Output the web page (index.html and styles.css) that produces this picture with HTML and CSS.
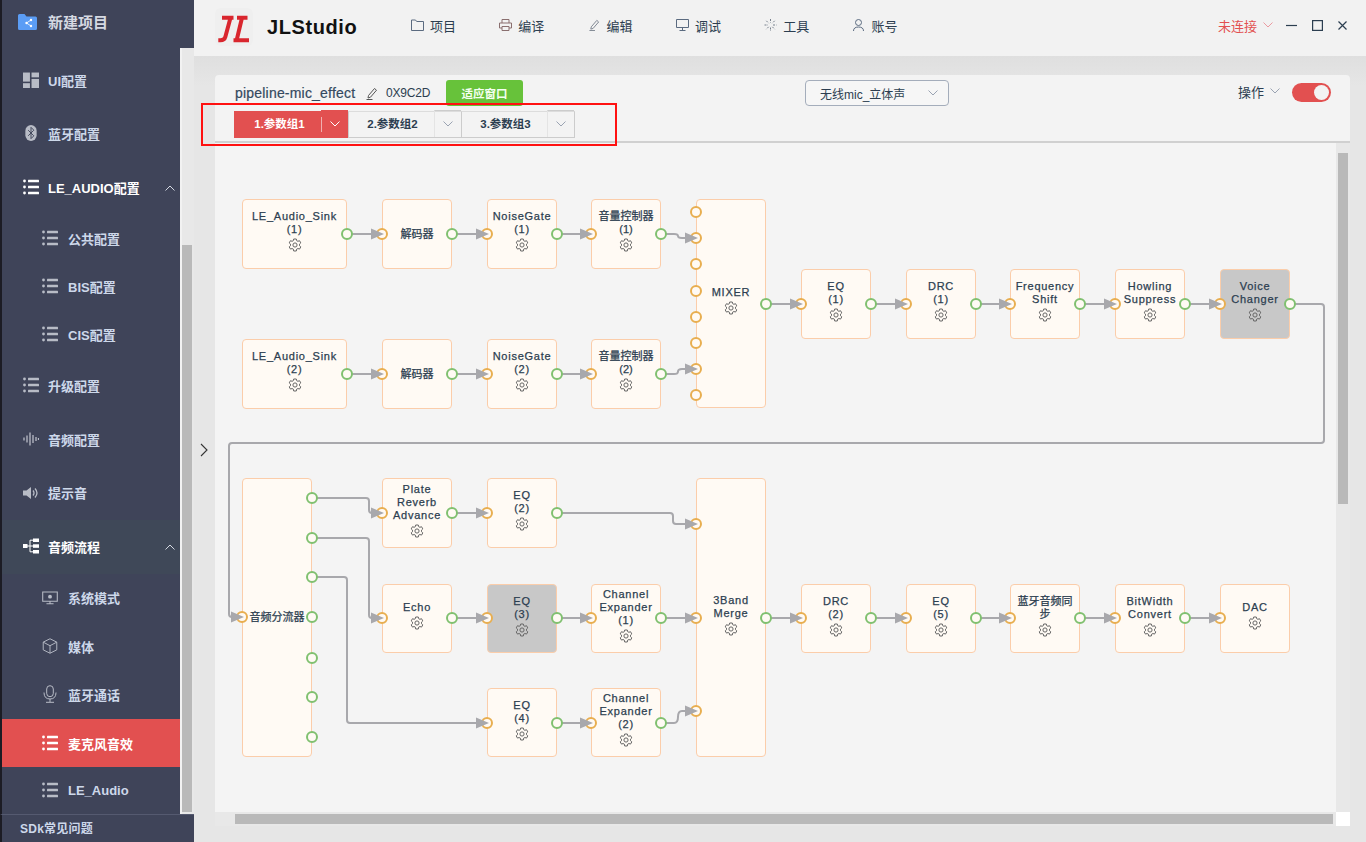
FILE: index.html
```html
<!DOCTYPE html>
<html lang="zh">
<head>
<meta charset="utf-8">
<title>JLStudio</title>
<link rel="stylesheet" href="styles.css">
</head>
<body>
<svg class="defs" width="0" height="0">
  <defs>
    <symbol id="i-list" viewBox="0 0 16 16"><circle cx="1.500" cy="2" r="1.400"/><circle cx="1.500" cy="8" r="1.400"/><circle cx="1.500" cy="14" r="1.400"/><rect x="5" y=".7" width="11" height="2.600" rx=".5"/><rect x="5" y="6.700" width="11" height="2.600" rx=".5"/><rect x="5" y="12.700" width="11" height="2.600" rx=".5"/></symbol>
    <symbol id="i-gear" viewBox="0 0 14 14"><path fill="none" stroke="currentColor" stroke-width="1" d="M5.700 1h2.600l.4 1.700 1.200.6 1.600-.6 1.300 2.200-1.300 1.200v1.600l1.300 1.200-1.300 2.200-1.600-.6-1.200.6-.4 1.900H5.700l-.4-1.900-1.200-.6-1.600.6-1.300-2.200 1.300-1.200V6.100L1.200 4.900l1.300-2.200 1.600.6 1.200-.6z"/><circle cx="7" cy="7" r="2.100" fill="none" stroke="currentColor" stroke-width="1"/></symbol>
    <symbol id="i-chev" viewBox="0 0 10 6"><path d="M.5.5 5 5 9.500.5" fill="none" stroke="currentColor" stroke-width="1"/></symbol>
    <symbol id="i-pen" viewBox="0 0 12 13"><path d="M2.500 8.500 8.500 1.500l2 1.700-6 7-2.500.8zM.5 12.500h6" fill="none" stroke="currentColor" stroke-width="1"/></symbol>
  </defs>
</svg>
<div class="app">
  <aside class="side">
    <div class="side-top">
      <svg class="ic-folder" viewBox="0 0 19 16"><path d="M0 1.500Q0 0 1.500 0h5l2 2.500h9Q19 2.500 19 4v10.500q0 1.500-1.500 1.500h-16Q0 16 0 14.500z" fill="#5b9df5"/><circle cx="13" cy="6" r="1.200" fill="#fff"/><circle cx="8.500" cy="9" r="1.200" fill="#fff"/><circle cx="13" cy="12" r="1.200" fill="#fff"/><path d="M13 6 8.500 9 13 12" fill="none" stroke="#fff" stroke-width=".8"/></svg>
      <span class="top-label">新建项目</span>
    </div>
    <div class="side-mid">
      <nav class="menu">
        <a class="row row-first">
          <svg class="ic" viewBox="0 0 15 15"><g fill="#b8bcc6"><rect width="6.500" height="8.500" y=".5"/><rect x="8" y=".5" width="7" height="4.500"/><rect y="10.500" width="6.500" height="4.500"/><rect x="8" y="6.500" width="7" height="8.500"/></g></svg>
          <span>UI配置</span>
        </a>
        <a class="row">
          <svg class="ic" viewBox="0 0 15 17"><rect x="1.500" y="0" width="12" height="17" rx="6" fill="#b8bcc6"/><path d="M4.500 5.500l6 6-3 3v-12l3 3-6 6" fill="none" stroke="#3f4459" stroke-width="1"/></svg>
          <span>蓝牙配置</span>
        </a>
        <a class="row row-open">
          <svg class="ic ic-w"><use href="#i-list"/></svg>
          <span>LE_AUDIO配置</span>
          <svg class="up" viewBox="0 0 10 6"><path d="M.5 5.500 5 1l4.500 4.500" fill="none" stroke="currentColor"/></svg>
        </a>
        <a class="sub"><svg class="ic ic-g"><use href="#i-list"/></svg><span>公共配置</span></a>
        <a class="sub"><svg class="ic ic-g"><use href="#i-list"/></svg><span>BIS配置</span></a>
        <a class="sub"><svg class="ic ic-g"><use href="#i-list"/></svg><span>CIS配置</span></a>
        <a class="row"><svg class="ic ic-g"><use href="#i-list"/></svg><span>升级配置</span></a>
        <a class="row">
          <svg class="ic" viewBox="0 0 16 14"><g stroke="#b8bcc6" stroke-width="1.300"><path d="M1 5.500v3M4 3.500v7M7 .5v13M10 3v8M13 5v4M15.500 6v2"/></g></svg>
          <span>音频配置</span>
        </a>
        <a class="row row-short">
          <svg class="ic" viewBox="0 0 16 14"><path d="M0 4.500h3.500L8 1v12L3.500 9.500H0z" fill="#b8bcc6"/><path d="M10 4.500q2 2.500 0 5M12 2.500q4 4.500 0 9" fill="none" stroke="#b8bcc6" stroke-width="1.300"/></svg>
          <span>提示音</span>
        </a>
        <a class="row row-open row-flow">
          <svg class="ic" viewBox="0 0 16 16"><g fill="#fff"><rect x="0" y="6" width="4.500" height="4"/><rect x="10" y="0.500" width="6" height="3.500"/><rect x="10" y="6.300" width="6" height="3.500"/><rect x="10" y="12" width="6" height="3.500"/></g><path d="M4 8h6M7 2.200V13.800M7 2.200h3M7 13.800h3" stroke="#fff" fill="none"/></svg>
          <span>音频流程</span>
          <svg class="up" viewBox="0 0 10 6"><path d="M.5 5.500 5 1l4.500 4.500" fill="none" stroke="currentColor"/></svg>
        </a>
        <a class="sub sub-tall">
          <svg class="ic" viewBox="0 0 18 15"><path d="M.8.8h16.400v10.400H.800zM5 14h8M9 11.200V14" fill="none" stroke="#b8bcc6" stroke-width="1.200"/><circle cx="9" cy="6" r="2.200" fill="#b8bcc6"/></svg>
          <span>系统模式</span>
        </a>
        <a class="sub">
          <svg class="ic" viewBox="0 0 17 17"><path d="M8.500.8l7.200 3.600v8.200l-7.200 3.600-7.200-3.600V4.400zM1.300 4.400l7.200 3.800 7.200-3.800M8.500 8.200v8" fill="none" stroke="#b8bcc6"/></svg>
          <span>媒体</span>
        </a>
        <a class="sub">
          <svg class="ic ic-mic" viewBox="0 0 14 18"><rect x="3.700" y=".7" width="6.600" height="11" rx="3.300" fill="none" stroke="#b8bcc6"/><path d="M1 7.500q0 6.500 6 6.500t6-6.500M7 14v3M3 17.300h8" fill="none" stroke="#b8bcc6"/></svg>
          <span>蓝牙通话</span>
        </a>
        <a class="sub sub-active"><svg class="ic ic-w"><use href="#i-list"/></svg><span>麦克风音效</span></a>
        <a class="sub"><svg class="ic ic-g"><use href="#i-list"/></svg><span>LE_Audio</span></a>
      </nav>
      <div class="side-track"><div class="side-thumb"></div></div>
    </div>
    <div class="side-foot">SDk常见问题</div>
  </aside>

  <div class="main">
    <header class="top">
      <div class="logo">
        <svg viewBox="0 0 36 36" width="36" height="36"><path d="M6 8.700H17.500M14.500 8.700 9.300 28Q8.400 31.300 4.500 31.300H2.300M21 8.700H31.500M26 8.700 20.700 31M17.500 31.200H33" fill="none" stroke="#d9262e" stroke-width="4"/></svg>
      </div>
      <div class="brand">JLStudio</div>
      <nav class="nav">
        <a class="nav-item"><svg viewBox="0 0 13 12"><path d="M.5 1h4l1.200 1.500h6.800v9H.5z" fill="none" stroke="#5b6b80"/></svg>项目</a>
        <a class="nav-item"><svg viewBox="0 0 13 12"><path d="M3 4V.5h7V4M3 9H.5V4h12v5H10M3 7.500h7v4H3z" fill="none" stroke="#8a6f6f"/></svg>编译</a>
        <a class="nav-item"><svg><use href="#i-pen"/></svg>编辑</a>
        <a class="nav-item"><svg viewBox="0 0 13 12"><path d="M.5.5h12v8H.5zM3.500 11.500h6M6.500 8.500v3" fill="none" stroke="#5b6b80"/></svg>调试</a>
        <a class="nav-item"><svg viewBox="0 0 13 12"><path d="M6.500 0v3.500M6.500 8.500V12M.5 6H4M9 6h3.500M2.300 1.800l2.400 2.400M8.300 7.800l2.400 2.400M10.700 1.800 8.300 4.200M4.700 7.800l-2.400 2.400" stroke="#77808c" stroke-dasharray="2 1"/></svg>工具</a>
        <a class="nav-item"><svg viewBox="0 0 13 12"><circle cx="6.500" cy="3.500" r="3" fill="none" stroke="#5b6b80"/><path d="M1.500 12q0-4 5-4t5 4" fill="none" stroke="#5b6b80"/></svg>账号</a>
      </nav>
      <div class="conn">未连接<svg class="chev"><use href="#i-chev"/></svg></div>
      <div class="win">
        <svg viewBox="0 0 11 11"><path d="M0 5.500h11" stroke="#2c3e50" stroke-width="1.200"/></svg>
        <svg viewBox="0 0 11 11"><rect x=".6" y=".6" width="9.800" height="9.800" fill="none" stroke="#2c3e50" stroke-width="1.200"/></svg>
        <svg viewBox="0 0 11 11"><path d="M1.500 1.500l8 8M9.500 1.500l-8 8" stroke="#2c3e50" stroke-width="1.200"/></svg>
      </div>
    </header>

    <div class="work">
      <div class="gutter"><svg viewBox="0 0 8 14" width="8" height="14"><path d="M1 1l6 6-6 6" fill="none" stroke="#333" stroke-width="1.100"/></svg></div>
      <section class="card">
        <div class="card-head">
          <div class="head-line">
            <span class="pipe">pipeline-mic_effect</span>
            <svg class="pen"><use href="#i-pen"/></svg>
            <span class="hex">0X9C2D</span>
            <button class="fit">适应窗口</button>
            <div class="sel">无线mic_立体声<svg class="chev"><use href="#i-chev"/></svg></div>
            <div class="ops">操作<svg class="chev"><use href="#i-chev"/></svg></div>
            <div class="toggle"><i></i></div>
          </div>
          <div class="tabs">
            <div class="tab tab-on"><span>1.参数组1</span><b><svg class="chev"><use href="#i-chev"/></svg></b></div>
            <div class="tab tab-mid"><span>2.参数组2</span><b><svg class="chev"><use href="#i-chev"/></svg></b></div>
            <div class="tab"><span>3.参数组3</span><b><svg class="chev"><use href="#i-chev"/></svg></b></div>
          </div>
        </div>
        <div class="canvas-wrap">
          <div class="canvas" id="canvas">
            <svg class="wires" id="wires" width="1121" height="669" viewBox="0 0 1121 669"></svg>
          </div>
          <div class="vbar"><div class="vthumb"></div></div>
          <div class="hbar"><div class="hthumb"></div></div>
          <div class="corner"></div>
        </div>
      </section>
    </div>
  </div>
  <div class="redbox"></div>
</div>
<script src="app.js"></script>
</body>
</html>
```
FILE: styles.css
```css
* { box-sizing: border-box; }
html, body { margin: 0; height: 100%; overflow: hidden; }
body { font-family: "Liberation Sans", "Noto Sans CJK SC", sans-serif; color: #2c3e50; background: #e6e6e6; }
.defs { position: absolute; }
.app { position: relative; display: flex; width: 1366px; height: 842px; overflow: hidden; }

/* sidebar */
.side { width: 194px; display: flex; flex-direction: column; background: #e8e8e8; flex: none; }
.side-top { height: 48px; background: #3f4459; border-left: 2px solid #1c1c24; display: flex; align-items: flex-start; padding: 14px 0 0 16px; color: #d5d9e2; }
.ic-folder { width: 19px; height: 16px; margin-right: 11px; flex: none; }
.top-label { font-size: 15px; font-weight: 700; line-height: 18px; }
.side-mid { flex: 1; display: flex; min-height: 0; }
.menu { width: 180px; background: #3f4459; border-left: 2px solid #1c1c24; padding-top: 5px; display: flex; flex-direction: column; }
.row, .sub { display: flex; align-items: center; flex: none; color: #cdd8ea; font-size: 13px; font-weight: 700; position: relative; padding-bottom: 2px; }
.row { height: 54px; padding-left: 21px; }
.row-first { padding-bottom: 0; }
.row-short { height: 53px; }
.sub { height: 48px; padding-left: 40px; }
.sub-tall { height: 49px; }
.row-open { color: #fff; }
.row-flow { background: #3f4858; }
.sub-active { background: #e25050; color: #fff; padding-bottom: 0; }
.ic { width: 16px; height: 16px; margin-right: 9px; flex: none; }
.ic-w { fill: #fff; }
.ic-g { fill: #b8bcc6; }
.sub .ic { margin-right: 10px; }
.ic-mic { height: 18px; }
.up { position: absolute; right: 5px; top: 50%; margin-top: -3px; width: 10px; height: 6px; color: #d5d9e2; }
.side-track { width: 14px; padding-left: 2px; background: linear-gradient(90deg, #f2f2f2 2px, #e8e8e8 2px); }
.side-thumb { width: 10px; height: 567px; margin-top: 197px; background: #b9b9b9; }
.side-foot { height: 28px; background: #3f4459; border-left: 2px solid #1c1c24; border-top: 1px solid #555a70; padding: 7px 0 0 18px; font-size: 12px; letter-spacing: .25px; line-height: 15px; font-weight: 700; color: #cdd8ea; }

/* header */
.main { flex: 1; display: flex; flex-direction: column; min-width: 0; }
.top { height: 56px; background: #f2f2f2; display: flex; align-items: center; flex: none; padding-bottom: 6px; }
.logo { width: 38px; height: 38px; margin: 4px 0 0 21px; background: #efefef; border-radius: 6px; display: flex; align-items: center; justify-content: center; flex: none; }
.brand { margin: 4px 0 0 14px; width: 144px; font-size: 20px; font-weight: 700; letter-spacing: .6px; color: #111; }
.nav { display: flex; flex: 1; }
.nav-item { display: flex; align-items: center; width: 88.300px; font-size: 13px; color: #2c3e50; flex: none; }
.nav-item svg { width: 13px; height: 12px; margin-right: 6px; color: #77808c; flex: none; }
.conn { display: flex; align-items: center; color: #e25050; font-size: 13px; margin-right: 13px; }
.chev { width: 10px; height: 6px; margin-left: 6px; color: #9aa3b2; flex: none; }
.conn .chev { color: #eb9aa0; }
.win { display: flex; gap: 14.500px; margin-right: 18px; }
.win svg { width: 11px; height: 11px; }

/* work area */
.work { flex: 1; display: flex; background: linear-gradient(#dfdfdf, #e6e6e6 30px); padding: 19px 16px 16px 0; min-height: 0; }
.gutter { width: 21px; flex: none; display: flex; align-items: flex-start; padding: 368px 0 0 6px; }
.card { flex: 1; background: #f3f3f3; border-radius: 4px 4px 0 0; display: flex; flex-direction: column; min-width: 0; }
.card-head { height: 68px; border-bottom: 2px solid #d0d0d0; padding: 5px 0 0 20px; flex: none; }
.head-line { display: flex; align-items: center; height: 26px; }
.pipe { font-size: 14px; letter-spacing: .2px; color: #34495e; width: 121px; white-space: nowrap; -webkit-text-stroke: .2px #34495e; }
.pen { width: 12px; height: 13px; margin-left: 10px; color: #555; flex: none; }
.hex { font-size: 12px; letter-spacing: -.2px; margin-left: 8px; width: 60px; color: #2c3e50; }
.fit { width: 77px; height: 26px; border: 0; border-radius: 3px; background: #67c23a; color: #f4fff0; font: 700 11.500px "Liberation Sans", "Noto Sans CJK SC", sans-serif; padding: 0; }
.sel { margin-left: 282px; width: 144px; height: 26px; border: 1px solid #a4adbb; border-radius: 4px; display: flex; align-items: center; justify-content: space-between; padding: 0 10px 0 14px; font-size: 12px; color: #2c3e50; background: #f6f6f6; }
.ops { margin-left: 289px; width: 54px; font-size: 13px; display: flex; align-items: center; margin-top: -4px; }
.ops .chev { margin-left: 6px; }
.toggle { width: 39px; height: 19px; border-radius: 10px; background: #e25050; position: relative; margin-top: -2px; }
.toggle i { position: absolute; top: 2px; right: 2px; width: 15px; height: 15px; border-radius: 50%; background: #f3f3f3; }
.tabs { display: flex; margin: 5px 0 0 -1px; }
.tab { width: 114px; height: 27px; display: flex; border-top: 1px solid #dcdcdc; border-bottom: 1px solid #ccc; font-size: 11.500px; font-weight: 700; color: #2c3e50; position: relative; background: #f3f3f3; }
.tab-mid { width: 113px; }
.tab span { flex: 1; text-align: center; line-height: 25px; padding-left: 2px; }
.tab b { width: 27px; margin-top: -2px; border-top: 1px solid #ccc; border-left: 1px solid #e4e4e4; display: flex; align-items: center; justify-content: center; font-weight: 400; }
.tab b .chev { margin: 0; }
.tab + .tab { border-left: 1px solid #ccc; }
.tab:last-child { border-right: 1px solid #ccc; }
.tab-on { background: #e25050; color: #fff; border: 0; }
.tab-on span { line-height: 27px; padding-left: 4px; }
.tab-on b { background: #e25050; border: 0; position: relative; margin-top: -1px; }
.tab-on b::before { content: ""; position: absolute; left: 0; top: 7px; bottom: 6px; width: 1px; background: #f0b0b0; }
.tab-on .chev { color: #fff; }
.redbox { position: absolute; left: 201px; top: 103px; width: 416px; height: 43px; border: 2px solid #f11; }

/* canvas */
.canvas-wrap { position: relative; flex: 1; background: #f4f4f4; min-height: 0; overflow: hidden; }
.canvas { position: relative; width: 1121px; height: 669px; }
.wires { position: absolute; left: 0; top: 0; }
.node { position: absolute; background: #fffaf4; border: 1px solid #fbcdaa; border-radius: 4px; display: flex; flex-direction: column; align-items: center; justify-content: center; text-align: center; font-size: 11px; line-height: 13px; letter-spacing: .75px; color: #2c3e50; -webkit-text-stroke: .25px #2c3e50; }
.node-cjk { letter-spacing: 0; }
.node-gear svg { margin-bottom: 6px; }
.node-sel { background: #c8c8c8; }
.node svg { width: 14px; height: 14px; margin-top: 2px; color: #666; flex: none; }
.node .nm { white-space: pre-line; }
.port { position: absolute; width: 12px; height: 12px; margin: -6px 0 0 -6px; border-radius: 50%; border: 2px solid #e8ae50; background: #fffaf4; }
.port-out { border-color: #80c070; }
.vbar { position: absolute; right: 0; top: 0; width: 14px; height: 669px; background: #e8e8e8; padding: 10px 0 0 2px; }
.vthumb { width: 10px; height: 351px; background: #b9b9b9; }
.hbar { position: absolute; left: 0; top: 669px; width: 1121px; height: 14px; background: #e8e8e8; padding: 2px 0 0 20px; }
.hthumb { width: 1098px; height: 10px; background: #b9b9b9; }
.corner { position: absolute; right: 0; bottom: 0; width: 14px; height: 14px; background: #fff; }
```
FILE: app.js
```js
var OX = 215, OY = 143;
var GEAR = '<svg><use href="#i-gear"/></svg>';
var nodes = [
  [242,199,105,70,'LE_Audio_Sink\n(1)',1],
  [382,199,70,70,'解码器',0],
  [487,199,70,70,'NoiseGate\n(1)',1],
  [591,199,70,70,'音量控制器\n(1)',1],
  [696,199,70,209,'MIXER',1],
  [801,269,70,70,'EQ\n(1)',1],
  [906,269,70,70,'DRC\n(1)',1],
  [1010,269,70,70,'Frequency\nShift',1],
  [1115,269,70,70,'Howling\nSuppress',1],
  [1220,269,70,70,'Voice\nChanger',1,1],
  [242,339,105,70,'LE_Audio_Sink\n(2)',1],
  [382,339,70,70,'解码器',0],
  [487,339,70,70,'NoiseGate\n(2)',1],
  [591,339,70,70,'音量控制器\n(2)',1],
  [242,478,70,279,'音频分流器',0],
  [382,478,70,70,'Plate\nReverb\nAdvance',1],
  [487,478,70,70,'EQ\n(2)',1],
  [696,478,70,279,'3Band\nMerge',1],
  [382,584,70,69,'Echo',1],
  [487,584,70,69,'EQ\n(3)',1,1],
  [591,584,70,69,'Channel\nExpander\n(1)',1],
  [801,584,70,69,'DRC\n(2)',1],
  [906,584,70,69,'EQ\n(5)',1],
  [1010,584,70,69,'蓝牙音频同\n步',1],
  [1115,584,70,69,'BitWidth\nConvert',1],
  [1220,584,70,69,'DAC',1],
  [487,688,70,69,'EQ\n(4)',1],
  [591,688,70,69,'Channel\nExpander\n(2)',1]
];
var outs = [[347,234],[452,234],[557,234],[661,234],[766,304],[871,304],[976,304],[1080,304],[1185,304],[1290,304],
  [347,374],[452,374],[557,374],[661,374],
  [312,498],[312,538],[312,577],[312,617],[312,658],[312,697],[312,737],
  [452,513],[557,513],[452,618],[557,618],[661,618],[766,618],[871,618],[976,618],[1080,618],[1185,618],[557,723],[661,723]];
var ins = [[382,234],[487,234],[591,234],[696,212],[696,238],[696,264],[696,291],[696,317],[696,343],[696,369],[696,395],
  [801,304],[906,304],[1010,304],[1115,304],[1220,304],
  [382,374],[487,374],[591,374],
  [242,617],[382,513],[487,513],[696,524],[382,618],[487,618],[591,618],[696,618],[801,618],[906,618],[1010,618],[1115,618],[1220,618],
  [487,723],[591,723],[696,711]];
var wires = [
  'M347 234H382','M452 234H487','M557 234H591','M661 234H674Q678 234 678 236Q678 238 682 238H696',
  'M766 304H801','M871 304H906','M976 304H1010','M1080 304H1115','M1185 304H1220',
  'M347 374H382','M452 374H487','M557 374H591','M661 374H674Q678 374 678 371.500Q678 369 682 369H696',
  'M1290 304H1321Q1324 304 1324 307V440Q1324 443 1321 443H232Q229 443 229 446V614Q229 617 232 617H242',
  'M312 498H366Q369 498 369 501V510Q369 513 372 513H382',
  'M452 513H487','M557 513H670Q673 513 673 516V521Q673 524 676 524H696',
  'M312 538H366Q369 538 369 541V615Q369 618 372 618H382',
  'M312 577H344Q347 577 347 580V720Q347 723 350 723H487',
  'M452 618H487','M557 618H591','M661 618H696','M766 618H801','M871 618H906','M976 618H1010','M1080 618H1115','M1185 618H1220',
  'M557 723H591','M661 723H674Q678 723 678 717Q678 711 682 711H696'
];
var arrowTips = [[382,234],[487,234],[591,234],[696,238],[801,304],[906,304],[1010,304],[1115,304],[1220,304],
  [382,374],[487,374],[591,374],[696,369],[242,617],[382,513],[487,513],[696,524],[382,618],[487,618],[591,618],[696,618],
  [801,618],[906,618],[1010,618],[1115,618],[1220,618],[487,723],[591,723],[696,711]];

var canvas = document.getElementById('canvas');
var svg = document.getElementById('wires');
var s = '<g transform="translate(' + (-OX) + ' ' + (-OY) + ')" fill="none" stroke="#a8a8ac" stroke-width="2">';
wires.forEach(function (d) { s += '<path d="' + d + '"/>'; });
s += '</g>';
svg.innerHTML = s;

nodes.forEach(function (n) {
  var el = document.createElement('div');
  var cjk = /[^\x00-\x7f]/.test(n[4]);
  el.className = 'node' + (n[6] ? ' node-sel' : '') + (cjk ? ' node-cjk' : '') + (n[5] ? ' node-gear' : '');
  el.style.left = (n[0] - OX) + 'px';
  el.style.top = (n[1] - OY) + 'px';
  el.style.width = n[2] + 'px';
  el.style.height = n[3] + 'px';
  el.innerHTML = '<div class="nm"></div>' + (n[5] ? GEAR : '');
  el.firstChild.textContent = n[4];
  canvas.appendChild(el);
});
function port(p, cls) {
  var el = document.createElement('i');
  el.className = 'port ' + cls;
  el.style.left = (p[0] - OX) + 'px';
  el.style.top = (p[1] - OY) + 'px';
  canvas.appendChild(el);
}
ins.forEach(function (p) { port(p, 'port-in'); });
outs.forEach(function (p) { port(p, 'port-out'); });

var over = document.createElementNS('http://www.w3.org/2000/svg', 'svg');
over.setAttribute('class', 'wires');
over.setAttribute('width', '1121');
over.setAttribute('height', '669');
var h = '<g transform="translate(' + (-OX) + ' ' + (-OY) + ')" fill="#a8a8ac">';
arrowTips.forEach(function (t) {
  var x = t[0], y = t[1];
  h += '<polygon points="' + (x - 11) + ',' + (y - 5.5) + ' ' + (x + 2) + ',' + y + ' ' + (x - 11) + ',' + (y + 5.5) + '"/>';
});
h += '</g>';
over.innerHTML = h;
canvas.appendChild(over);
```
